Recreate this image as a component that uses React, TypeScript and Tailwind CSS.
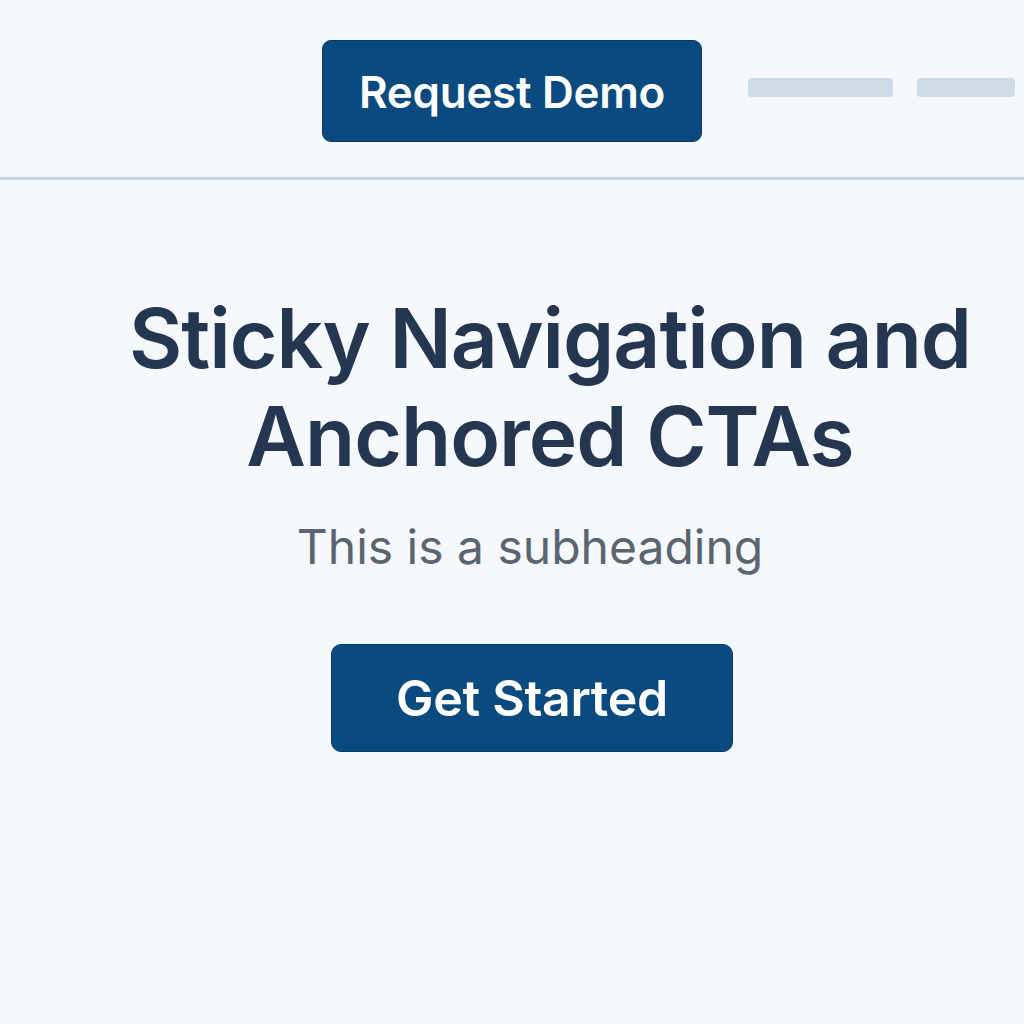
import React from "react";

export default function App() {
  return (
    <div className="min-h-[1024px] w-[1024px] overflow-hidden bg-[#f5f9fd]" style={{ fontFamily: "Inter, 'Noto Sans', sans-serif" }}>
      <header className="h-[180px] border-b-[3px] border-[#cad7e3] flex items-start pt-[40px]">
        <div className="w-[322px]" />
        <button className="w-[380px] h-[102px] rounded-[9px] bg-[#0b4a7e] border border-[#073a66] text-white text-[44px] font-semibold tracking-[-0.3px] pt-[2px]">
          Request Demo
        </button>
        <div className="flex gap-[24px] ml-[46px] mt-[38px]">
          <div className="w-[145px] h-[19px] rounded-[4px] bg-[#cfdce8]" />
          <div className="w-[98px] h-[19px] rounded-[4px] bg-[#cfdce8]" />
        </div>
      </header>
      <main className="flex flex-col items-center">
        <h1 className="mt-[110px] ml-[76px] text-center text-[82px] leading-[98px] font-semibold text-[#253650] tracking-[-1px]">
          Sticky Navigation and
          <br />
          Anchored CTAs
        </h1>
        <p className="mt-[32px] ml-[36px] text-[48px] leading-[58px] text-[#5b6570]">This is a subheading</p>
        <button className="mt-[68px] ml-[40px] w-[402px] h-[108px] rounded-[10px] bg-[#0b4a7e] border border-[#073a66] text-white text-[50px] font-semibold tracking-[-0.3px]">
          Get Started
        </button>
      </main>
    </div>
  );
}
